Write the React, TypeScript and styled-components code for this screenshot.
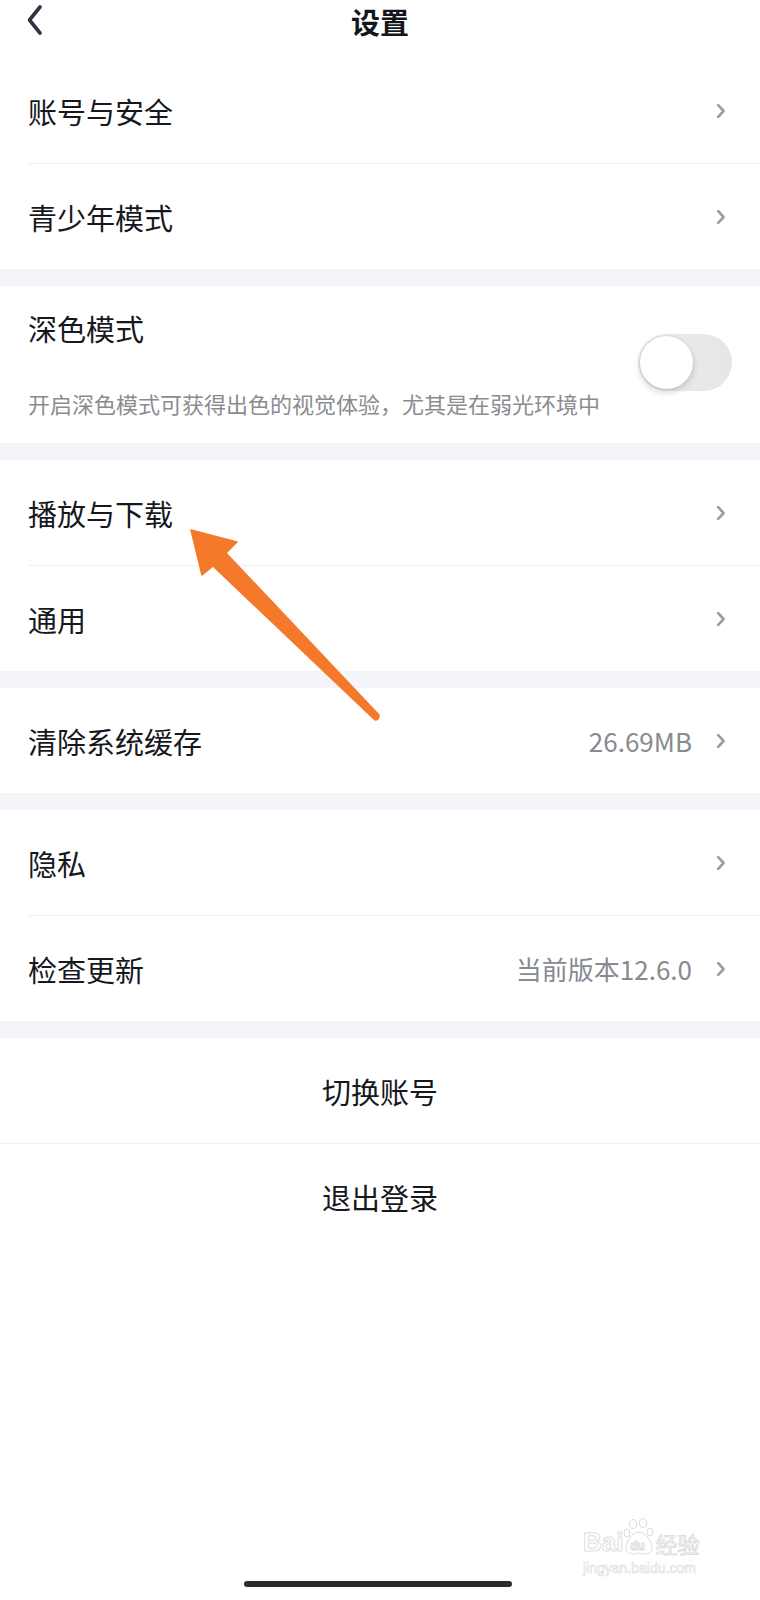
import React from 'react';
import styled, { createGlobalStyle } from 'styled-components';

const GlobalStyle = createGlobalStyle`
  html, body {
    margin: 0;
    padding: 0;
    background: #ffffff;
  }
  body {
    font-family: "Noto Sans CJK SC", "Noto Sans", sans-serif;
    color: #16181d;
  }
`

const Page = styled.div`
  position: relative;
  width: 760px;
  min-height: 1600px;
  display: flex;
  flex-direction: column;
  background: #ffffff;
  overflow: hidden;
`

const Header = styled.header`
  display: grid;
  grid-template-columns: 1fr auto 1fr;
  align-items: center;
  height: 42px;
  margin-bottom: 16px;
`

const BackBtn = styled.div`
  display: flex;
  align-items: center;
  padding-left: 26px;
  margin-top: -3px;
`

const Title = styled.h1`
  margin: 0;
  font-size: 29px;
  font-weight: 600;
  line-height: 42px;
  color: #14161b;
`

const Group = styled.section`
  background: #ffffff;
`

const Gap = styled.div`
  height: 17px;
  background: #f3f5f8;
`

const Row = styled.div`
  display: flex;
  align-items: center;
  height: 105px;
  padding: 0 34px 0 28px;
  font-size: 29px;
`

const Label = styled.span`
  flex: 1;
  line-height: 42px;
`

const Value = styled.span`
  font-size: 26px;
  color: #878a90;
  margin-right: 24px;
`

const Divider = styled.div<{ $full?: boolean }>`
  height: 1px;
  background: #f0f0f0;
  margin-left: ${p => (p.$full ? '0' : '28px')};
`

const ActionRow = styled.div`
  display: flex;
  align-items: center;
  justify-content: center;
  height: 105px;
  font-size: 29px;
  color: #16181d;
`

const DarkRow = styled.div`
  display: flex;
  align-items: center;
  padding: 21px 28px 25px 28px;
`

const DarkText = styled.div`
  flex: 1;
  display: flex;
  flex-direction: column;
`

const DarkTitle = styled.span`
  font-size: 29px;
  line-height: 42px;
`

const DarkDesc = styled.span`
  margin-top: 39px;
  font-size: 22px;
  line-height: 30px;
  color: #8b8c8f;
`

const Toggle = styled.div`
  display: flex;
  align-items: center;
  width: 94px;
  height: 57px;
  padding: 0 2px;
  box-sizing: border-box;
  border-radius: 29px;
  background: linear-gradient(90deg, #ededee, #e6e6e7);
`

const Knob = styled.div`
  width: 53px;
  height: 53px;
  border-radius: 50%;
  background: #ffffff;
  box-shadow: 0 3px 7px rgba(0, 0, 0, 0.18), 0 0 0 0.5px rgba(0, 0, 0, 0.08);
`

const Footer = styled.footer`
  margin-top: auto;
  display: flex;
  justify-content: center;
  padding: 0 4px 13px 0;
`

const HomeBar = styled.div`
  width: 268px;
  height: 6px;
  border-radius: 3px;
  background: #2b2b2b;
`

const Arrow = styled.svg`
  position: absolute;
  left: 185px;
  top: 524px;
  pointer-events: none;
`

const Watermark = styled.div`
  position: absolute;
  left: 583px;
  top: 1518px;
  display: flex;
  flex-direction: column;
  align-items: flex-start;
  color: transparent;
  -webkit-text-stroke: 1px #dedede;
  font-family: "Liberation Sans", "Noto Sans CJK SC", sans-serif;
`

const MarkTop = styled.div`
  display: flex;
  align-items: flex-end;
`

const MarkBig = styled.span`
  font-size: 26px;
  line-height: 28px;
  font-weight: 700;
`

const MarkCn = styled.span`
  font-size: 22px;
  line-height: 26px;
  font-family: "Noto Sans CJK SC", sans-serif;
`

const MarkUrl = styled.span`
  margin-top: 4px;
  font-size: 14px;
  line-height: 16px;
  -webkit-text-stroke: 0.6px #dcdcdc;
`

const Chevron = () => (
  <svg width="10" height="16" viewBox="0 0 10 16">
    <path d="M2.2 2.2 L7.6 8 L2.2 13.8" fill="none" stroke="#9b9b9f" strokeWidth="2.6" strokeLinecap="round" strokeLinejoin="round" />
  </svg>
)

const Paw = () => (
  <svg width="32" height="38" viewBox="0 0 32 38" fill="none" stroke="#dcdcdc" strokeWidth="1">
    <ellipse cx="10" cy="6" rx="3.5" ry="4.5" />
    <ellipse cx="20" cy="5" rx="3.5" ry="4.5" />
    <ellipse cx="4" cy="15" rx="3" ry="4" />
    <ellipse cx="27" cy="14" rx="3" ry="4" />
    <path d="M16 14 C9 14 3 24 3 30 C3 36 10 37 16 35 C22 37 29 36 29 30 C29 24 23 14 16 14 Z" />
    <text x="7" y="32" fontSize="12" fontFamily="Liberation Sans, sans-serif" fontWeight="700" fill="none">du</text>
  </svg>
)

const NavRow = ({ label, value }: { label: string; value?: string }) => (
  <Row>
    <Label>{label}</Label>
    {value && <Value>{value}</Value>}
    <Chevron />
  </Row>
)

const App = () => {
  return (
    <Page>
      <GlobalStyle />
      <Header>
        <BackBtn>
          <svg width="18" height="32" viewBox="0 0 18 32">
            <path d="M14 3 L3.5 16 L14 29" fill="none" stroke="#2f3540" strokeWidth="3.6" strokeLinecap="round" strokeLinejoin="round" />
          </svg>
        </BackBtn>
        <Title>设置</Title>
        <div />
      </Header>

      <Group>
        <NavRow label="账号与安全" />
        <Divider />
        <NavRow label="青少年模式" />
      </Group>
      <Gap />

      <Group>
        <DarkRow>
          <DarkText>
            <DarkTitle>深色模式</DarkTitle>
            <DarkDesc>开启深色模式可获得出色的视觉体验，尤其是在弱光环境中</DarkDesc>
          </DarkText>
          <Toggle>
            <Knob />
          </Toggle>
        </DarkRow>
      </Group>
      <Gap />

      <Group>
        <NavRow label="播放与下载" />
        <Divider />
        <NavRow label="通用" />
      </Group>
      <Gap />

      <Group>
        <NavRow label="清除系统缓存" value="26.69MB" />
      </Group>
      <Gap />

      <Group>
        <NavRow label="隐私" />
        <Divider />
        <NavRow label="检查更新" value="当前版本12.6.0" />
      </Group>
      <Gap />

      <Group>
        <ActionRow>切换账号</ActionRow>
        <Divider $full />
        <ActionRow>退出登录</ActionRow>
      </Group>

      <Footer>
        <HomeBar />
      </Footer>

      <Arrow width="200" height="200" viewBox="0 0 200 200">
        <path
          d="M6 6 L52 18 L41 29 L194 191 Q194 196 190 196 L28 42 L17 51 Z"
          fill="#f5792a"
          stroke="#f5792a"
          strokeWidth="1.5"
          strokeLinejoin="round"
        />
      </Arrow>

      <Watermark>
        <MarkTop>
          <MarkBig>Bai</MarkBig>
          <Paw />
          <MarkCn>经验</MarkCn>
        </MarkTop>
        <MarkUrl>jingyan.baidu.com</MarkUrl>
      </Watermark>
    </Page>
  );
};

export default App;
